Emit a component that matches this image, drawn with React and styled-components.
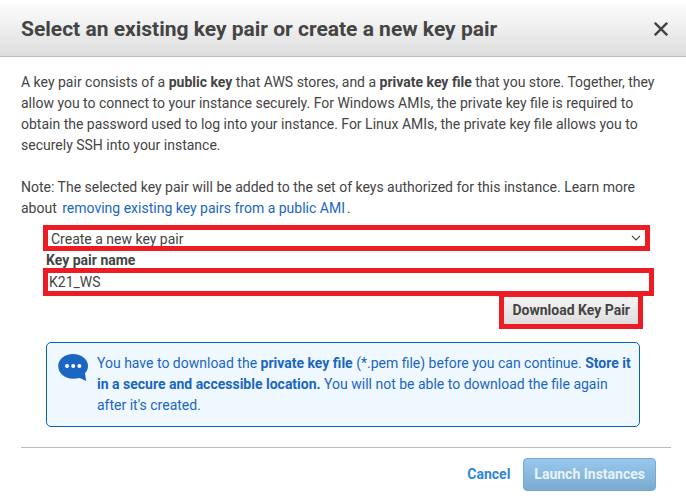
import React, { useState } from 'react'
import styled, { createGlobalStyle } from 'styled-components'

function App() {
    const [keyName, setKeyName] = useState('K21_WS')

    return (
        <DialogStyled role="dialog" aria-labelledby="dialog-title">
            <GlobalStyle />
            <HeaderStyled>
                <h1 id="dialog-title">Select an existing key pair or create a new key pair</h1>
                <CloseButton type="button" aria-label="Close">
                    <svg width="14" height="14" viewBox="0 0 14 14">
                        <path d="M0.8 0.8 L13.2 13.2 M13.2 0.8 L0.8 13.2" fill="none" stroke="#444" strokeWidth="2.4" />
                    </svg>
                </CloseButton>
            </HeaderStyled>
            <BodyStyled>
                <Paragraph>
                    A key pair consists of a <b>public key</b> that AWS stores, and a <b>private key file</b> that
                    you store. Together, they allow you to connect to your instance securely. For Windows AMIs, the
                    private key file is required to obtain the password used to log into your instance. For Linux
                    AMIs, the private key file allows you to securely SSH into your instance.
                </Paragraph>
                <Paragraph>
                    Note: The selected key pair will be added to the set of keys authorized for this instance. Learn
                    more about <TextLink href="#">removing existing key pairs from a public AMI</TextLink>.
                </Paragraph>
                <FormStyled onSubmit={(e) => e.preventDefault()}>
                    <SelectField>
                        <select aria-label="Key pair option" defaultValue="new">
                            <option value="new">Create a new key pair</option>
                        </select>
                        <svg width="10" height="6" viewBox="0 0 10 6">
                            <path d="M1 0.8 L5 4.8 L9 0.8" fill="none" stroke="#444" strokeWidth="1.2" />
                        </svg>
                    </SelectField>
                    <Label htmlFor="key-name">Key pair name</Label>
                    <TextInput
                        id="key-name"
                        type="text"
                        value={keyName}
                        onChange={(e) => setKeyName(e.target.value)}
                    />
                    <DownloadButton type="button">Download Key Pair</DownloadButton>
                </FormStyled>
                <InfoBox>
                    <svg width="31" height="28" viewBox="0 0 31 28">
                        <path
                            d="M15 1 C23.4 1 30 6 30 13 C30 15.800 29 18.200 27 20.200 L28.200 28 L21.800 25 C19.600 25.500 17.400 25.800 15 25.800 C6.700 25.800 0.200 20 0.200 13 C0.200 6 6.700 1 15 1 Z"
                            fill="#1a66c2"
                        />
                        <circle cx="9" cy="13" r="2" fill="#fff" />
                        <circle cx="15.200" cy="13" r="2" fill="#fff" />
                        <circle cx="21.400" cy="13" r="2" fill="#fff" />
                    </svg>
                    <p>
                        You have to download the <b>private key file</b> (*.pem file) before you can continue.{' '}
                        <b>Store it in a secure and accessible location.</b> You will not be able to download the
                        file again after it's created.
                    </p>
                </InfoBox>
                <FooterStyled>
                    <CancelButton type="button">Cancel</CancelButton>
                    <LaunchButton type="button">Launch Instances</LaunchButton>
                </FooterStyled>
            </BodyStyled>
        </DialogStyled>
    )
}

export default App

const GlobalStyle = createGlobalStyle`
    *{
        box-sizing: border-box;
        margin: 0;
        padding: 0;
    }
    body{
        background-color: white;
        color: #444;
        font-family: Roboto, sans-serif;
        font-size: 14px;
        line-height: 21px;
    }
    button, input, select{
        color: inherit;
        font: inherit;
    }
    button{
        cursor: pointer;
    }
    svg{
        display: block;
        flex-shrink: 0;
    }
`

const DialogStyled = styled.div`
    background-color: white;
`

const HeaderStyled = styled.header`
    display: flex;
    justify-content: space-between;
    align-items: center;
    padding: 16px 16px 14px 21px;
    background: linear-gradient(#fff, #ddd);
    border-bottom: 1px solid #bbb;
    h1{
        font-size: 21px;
        line-height: 26px;
        font-weight: 700;
    }
`

const CloseButton = styled.button`
    padding: 2px;
    background-color: transparent;
    border: none;
`

const BodyStyled = styled.main`
    padding: 15px 15px 10px 21px;
`

const Paragraph = styled.p`
    & + &{
        margin-top: 21px;
    }
`

const TextLink = styled.a`
    margin: 0 2px;
    color: #1a66c2;
    text-decoration: none;
`

const FormStyled = styled.form`
    display: flex;
    flex-direction: column;
    margin: 6px 17px 0 22px;
`

const SelectField = styled.div`
    display: flex;
    align-items: center;
    margin-right: 4px;
    padding-right: 4px;
    border: 5px solid #ed1c24;
    select{
        flex: 1;
        height: 16px;
        padding: 1px 0 0 3px;
        line-height: 16px;
        background-color: transparent;
        border: none;
        outline: none;
        appearance: none;
    }
`

const Label = styled.label`
    padding: 1px 3px 0;
    line-height: 16px;
    font-weight: 700;
`

const TextInput = styled.input`
    width: 100%;
    height: 28px;
    padding-left: 1px;
    border: 5px solid #ed1c24;
    outline: none;
`

const DownloadButton = styled.button`
    align-self: flex-end;
    height: 37px;
    margin: -4px 11px 0 0;
    padding: 0 8px;
    background: linear-gradient(#f5f5f5, #ddd);
    border: 5px solid #ed1c24;
    font-weight: 700;
`

const InfoBox = styled.section`
    display: flex;
    align-items: flex-start;
    gap: 8px;
    margin: 13px 31px 20px 25px;
    padding: 10px 8px 10px 11px;
    color: #1a66c2;
    background-color: #f0f8ff;
    border: 1px solid #0066bb;
    border-radius: 5px;
`

const FooterStyled = styled.footer`
    display: flex;
    justify-content: flex-end;
    align-items: center;
    gap: 13px;
    padding: 10px 15px 0 0;
    border-top: 1px solid #bbb;
`

const CancelButton = styled.button`
    color: #2f86dc;
    background-color: transparent;
    border: none;
    font-weight: 700;
`

const LaunchButton = styled.button`
    height: 33px;
    padding: 0 10px;
    color: #e9f3fb;
    background: linear-gradient(#99c8ee, #7aabcf);
    border: 1px solid #77a9cf;
    border-radius: 4px;
    font-weight: 700;
`
